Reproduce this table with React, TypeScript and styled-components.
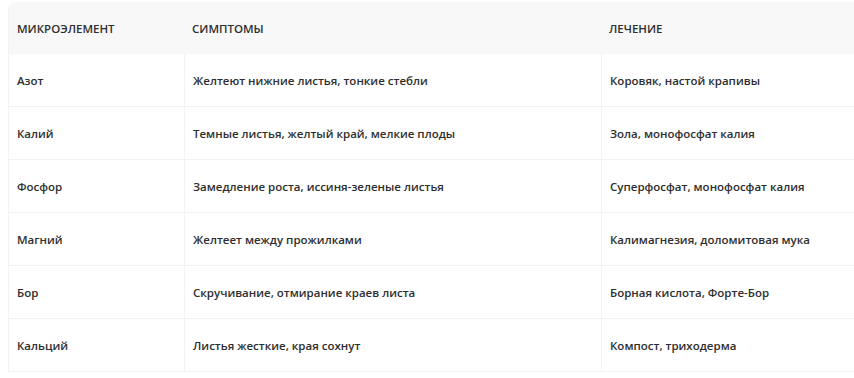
import React from "react";
import styled, { createGlobalStyle } from "styled-components";

const Global = createGlobalStyle`
  html, body { margin: 0; padding: 0; background: #ffffff; }
  body { font-family: "Open Sans", "Noto Sans", sans-serif; }
`;

const Wrap = styled.div`
  padding: 2px 0 0 8px;
`;

const Table = styled.table`
  width: 846px;
  border-collapse: separate;
  border-spacing: 0;
  border-left: 1px solid #f3f3f3;
  border-top-left-radius: 8px;
  overflow: hidden;
  table-layout: fixed;
`;

const HeadCell = styled.th<{ $w?: number }>`
  ${(p) => (p.$w ? `width: ${p.$w}px;` : "")}
  height: 52px;
  padding: 0 8px;
  background: #f8f8f8;
  text-align: left;
  font-size: 11.5px;
  font-weight: 600;
  color: #2e2e2e;
  text-transform: uppercase;
  box-sizing: border-box;
  &:first-child { border-top-left-radius: 8px; }
`;

const Cell = styled.td`
  height: 53px;
  padding: 1px 8px 0;
  box-sizing: border-box;
  font-size: 11.5px;
  font-weight: 600;
  color: #2e2e2e;
  border-bottom: 1px solid #f1f1f1;
  & + & { border-left: 1px solid #f3f3f3; }
`;

const rows = [
  ["Азот", "Желтеют нижние листья, тонкие стебли", "Коровяк, настой крапивы"],
  ["Калий", "Темные листья, желтый край, мелкие плоды", "Зола, монофосфат калия"],
  ["Фосфор", "Замедление роста, иссиня-зеленые листья", "Суперфосфат, монофосфат калия"],
  ["Магний", "Желтеет между прожилками", "Калимагнезия, доломитовая мука"],
  ["Бор", "Скручивание, отмирание краев листа", "Борная кислота, Форте-Бор"],
  ["Кальций", "Листья жесткие, края сохнут", "Компост, триходерма"],
];

export default function App() {
  return (
    <>
      <Global />
      <Wrap>
        <Table>
          <thead>
            <tr>
              <HeadCell $w={175}>Микроэлемент</HeadCell>
              <HeadCell $w={417}>Симптомы</HeadCell>
              <HeadCell>Лечение</HeadCell>
            </tr>
          </thead>
          <tbody>
            {rows.map((r) => (
              <tr key={r[0]}>
                {r.map((c, i) => (
                  <Cell key={i}>{c}</Cell>
                ))}
              </tr>
            ))}
          </tbody>
        </Table>
      </Wrap>
    </>
  );
}
